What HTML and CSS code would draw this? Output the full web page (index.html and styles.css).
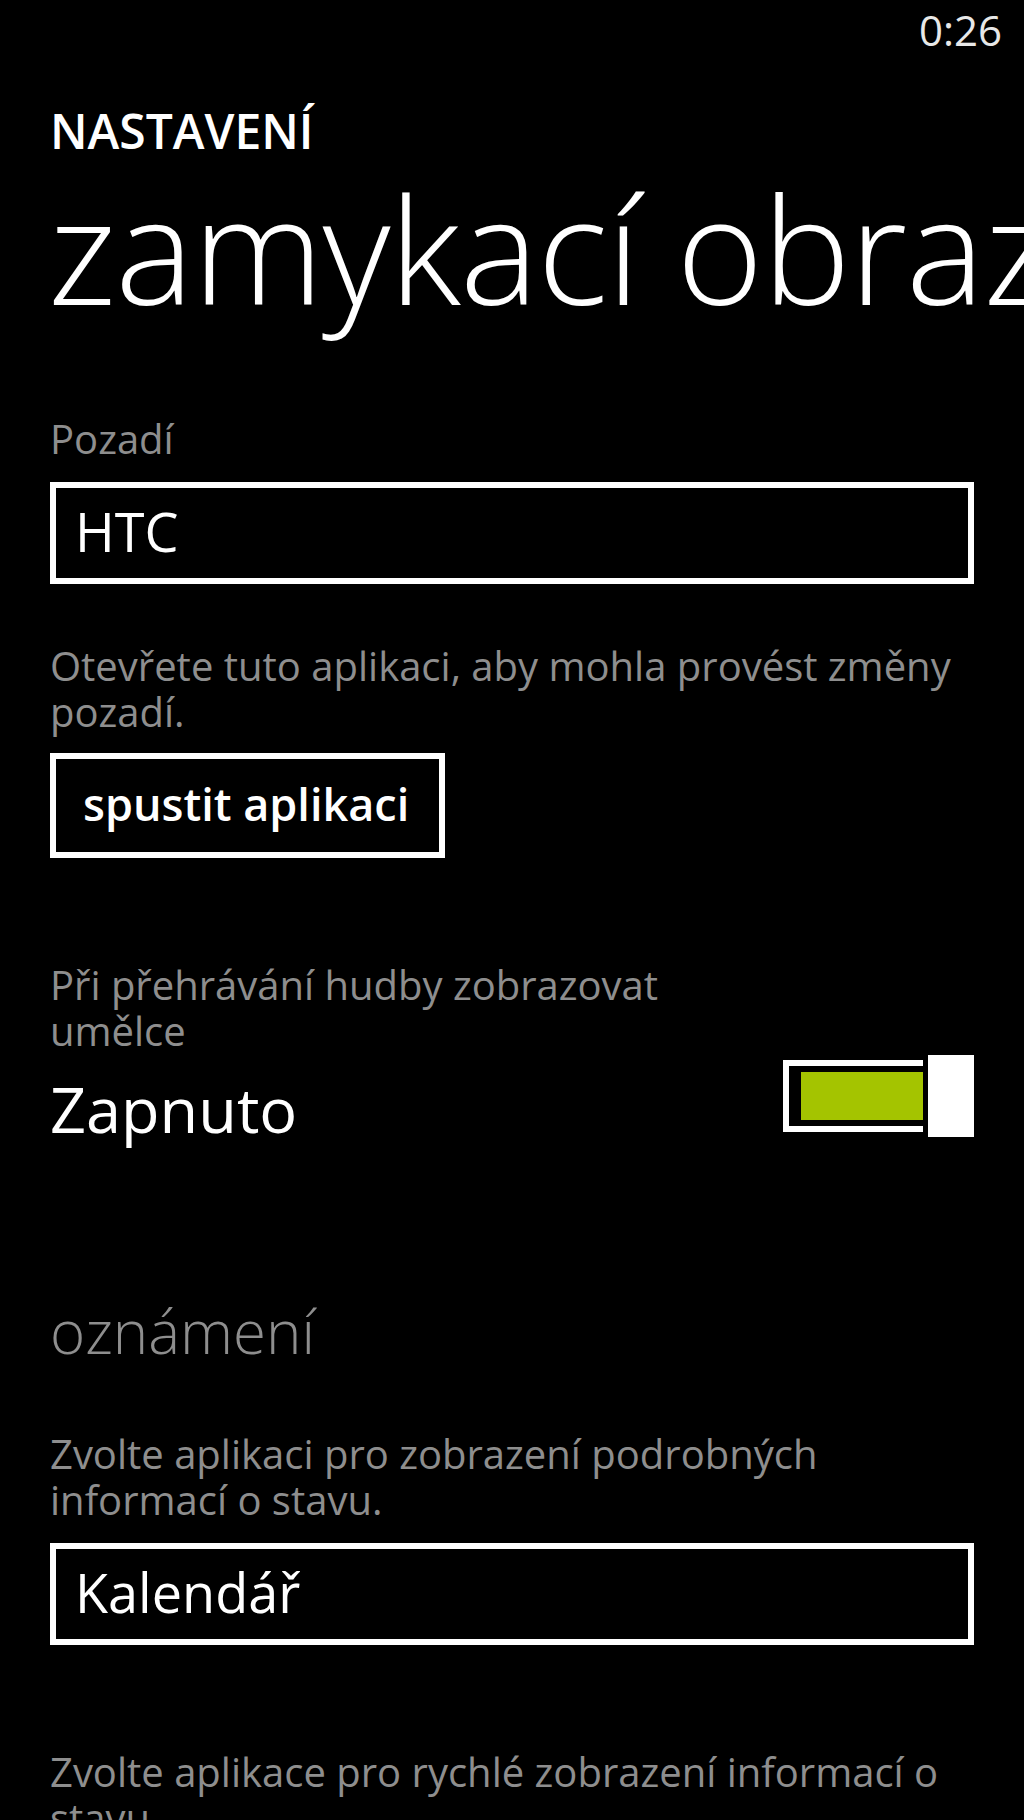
FILE: index.html
```html
<html>
<head>
    <title>zamykací obrazovka</title>
    <link rel="stylesheet" href="styles.css">
</head>
<body>

    <div class="status-bar">0:26</div>

    <div class="page">
        <div class="app-title">NASTAVENÍ</div>
        <h1 class="page-title">zamykací obrazovka</h1>

        <div class="label">Pozadí</div>
        <div class="picker">HTC</div>

        <p class="hint">Otevřete tuto aplikaci, aby mohla provést změny pozadí.</p>
        <button class="app-btn">spustit aplikaci</button>

        <div class="label toggle-label">Při přehrávání hudby zobrazovat umělce</div>
        <div class="toggle-row">
            <div class="toggle-state">Zapnuto</div>
            <div class="toggle">
                <div class="track"><div class="fill"></div></div>
                <div class="thumb"></div>
            </div>
        </div>

        <h2 class="section">oznámení</h2>

        <p class="hint detail">Zvolte aplikaci pro zobrazení podrobných informací o stavu.</p>
        <div class="picker">Kalendář</div>

        <p class="hint quick">Zvolte aplikace pro rychlé zobrazení informací o stavu.</p>
    </div>

</body>
</html>
```

FILE: styles.css
```css
body { margin: 0; background-color: #000; color: #fff; font-family: "Open Sans", "Noto Sans", sans-serif; overflow: hidden; }
.status-bar { padding: 5px 22px 0 0; font-size: 42px; line-height: 50px; text-align: right; color: #e8e8e8; }
.page { padding: 0 50px; }
.app-title { margin-top: 46px; font-size: 48px; line-height: 60px; font-weight: 600; }
.page-title { margin: 2px 0 0 -2px; font-size: 148px; line-height: 170px; font-weight: 300; letter-spacing: -1px; white-space: nowrap; }
.label, .hint { margin: 0; font-size: 40px; line-height: 46px; color: #8e8e8e; }
.label { margin-top: 83px; }
.picker { margin-top: 20px; height: 102px; box-sizing: border-box; border: 6px solid #fff; padding: 2px 0 6px 19px; font-size: 54px; line-height: 82px; }
.hint { margin-top: 59px; }
.app-btn { display: block; margin-top: 18px; width: 395px; height: 105px; box-sizing: border-box; border: 6px solid #fff; padding: 0 0 3px 27px; background: #000; color: #fff; text-align: left; font-family: inherit; font-size: 45px; line-height: 90px; font-weight: 600; }
.toggle-label { margin-top: 104px; max-width: 660px; }
.toggle-row { display: flex; justify-content: space-between; align-items: flex-start; margin-top: 1px; }
.toggle-state { margin-top: 12px; font-size: 63px; line-height: 84px; }
.toggle { display: flex; align-items: center; gap: 5px; }
.track { width: 140px; height: 72px; box-sizing: border-box; border: 6px solid #fff; border-right: 0; padding: 6px 0 6px 12px; }
.fill { height: 100%; background-color: #a4c400; }
.thumb { width: 46px; height: 82px; background-color: #fff; }
.section { margin: 140px 0 0; font-size: 60px; line-height: 80px; font-weight: 300; color: #8e8e8e; }
.detail { margin-top: 60px; }
.quick { margin-top: 104px; }
```
